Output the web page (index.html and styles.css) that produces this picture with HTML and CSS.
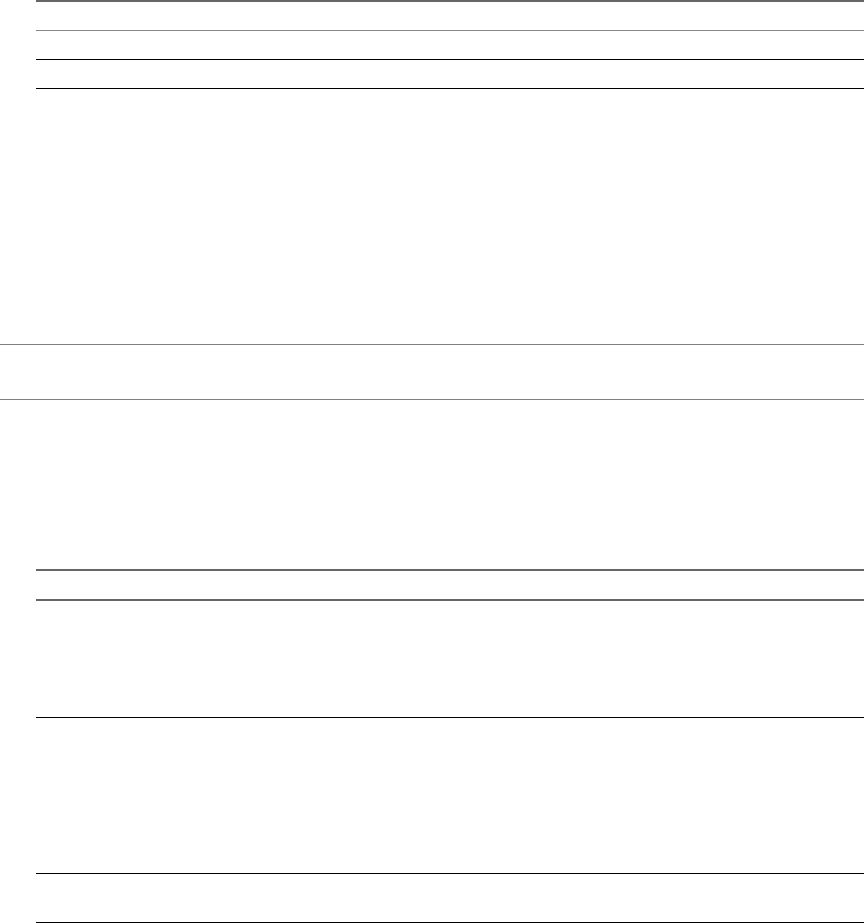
FILE: index.html
```html
<!DOCTYPE html>
<html lang="en">
<head>
  <meta charset="UTF-8" />
  <meta name="viewport" content="width=device-width, initial-scale=1.0"/>
  <title>Rules</title>
  <link rel="stylesheet" href="styles.css">
</head>
<body>

  <!-- top group -->
  <div class="group indented">
    <div class="rule heavy row-a"></div>
    <div class="rule light row-a"></div>
    <div class="rule dark row-a"></div>
    <div class="rule dark spacer-top"></div>
  </div>

  <!-- full width band -->
  <div class="group">
    <div class="rule mid band"></div>
    <div class="rule mid spacer-mid"></div>
  </div>

  <!-- bottom group -->
  <div class="group indented">
    <div class="rule heavy row-a"></div>
    <div class="rule heavy row-b"></div>
    <div class="rule dark row-c"></div>
    <div class="rule dark row-d"></div>
    <div class="rule dark"></div>
  </div>

</body>
</html>
```

FILE: styles.css
```css
body {
  margin: 0;
  background-color: #fff;
  font-family: 'Liberation Sans', Arial, sans-serif;
}

.group {
  margin-right: 1px;
}

.indented {
  margin-left: 36px;
}

.rule {
  border-top: 1px solid #000;
  box-sizing: border-box;
}

.rule.heavy {
  border-top: 2px solid #666;
}

.rule.light {
  border-top-color: #888;
}

.rule.mid {
  border-top-color: #808080;
}

.rule.dark {
  border-top-color: #000;
}

.row-a {
  height: 29px;
}

.rule.heavy.row-a {
  height: 30px;
}

.row-b {
  height: 118px;
}

.row-c {
  height: 156px;
}

.row-d {
  height: 49px;
}

.spacer-top {
  height: 256px;
}

.band {
  height: 55px;
}

.spacer-mid {
  height: 170px;
}
```
